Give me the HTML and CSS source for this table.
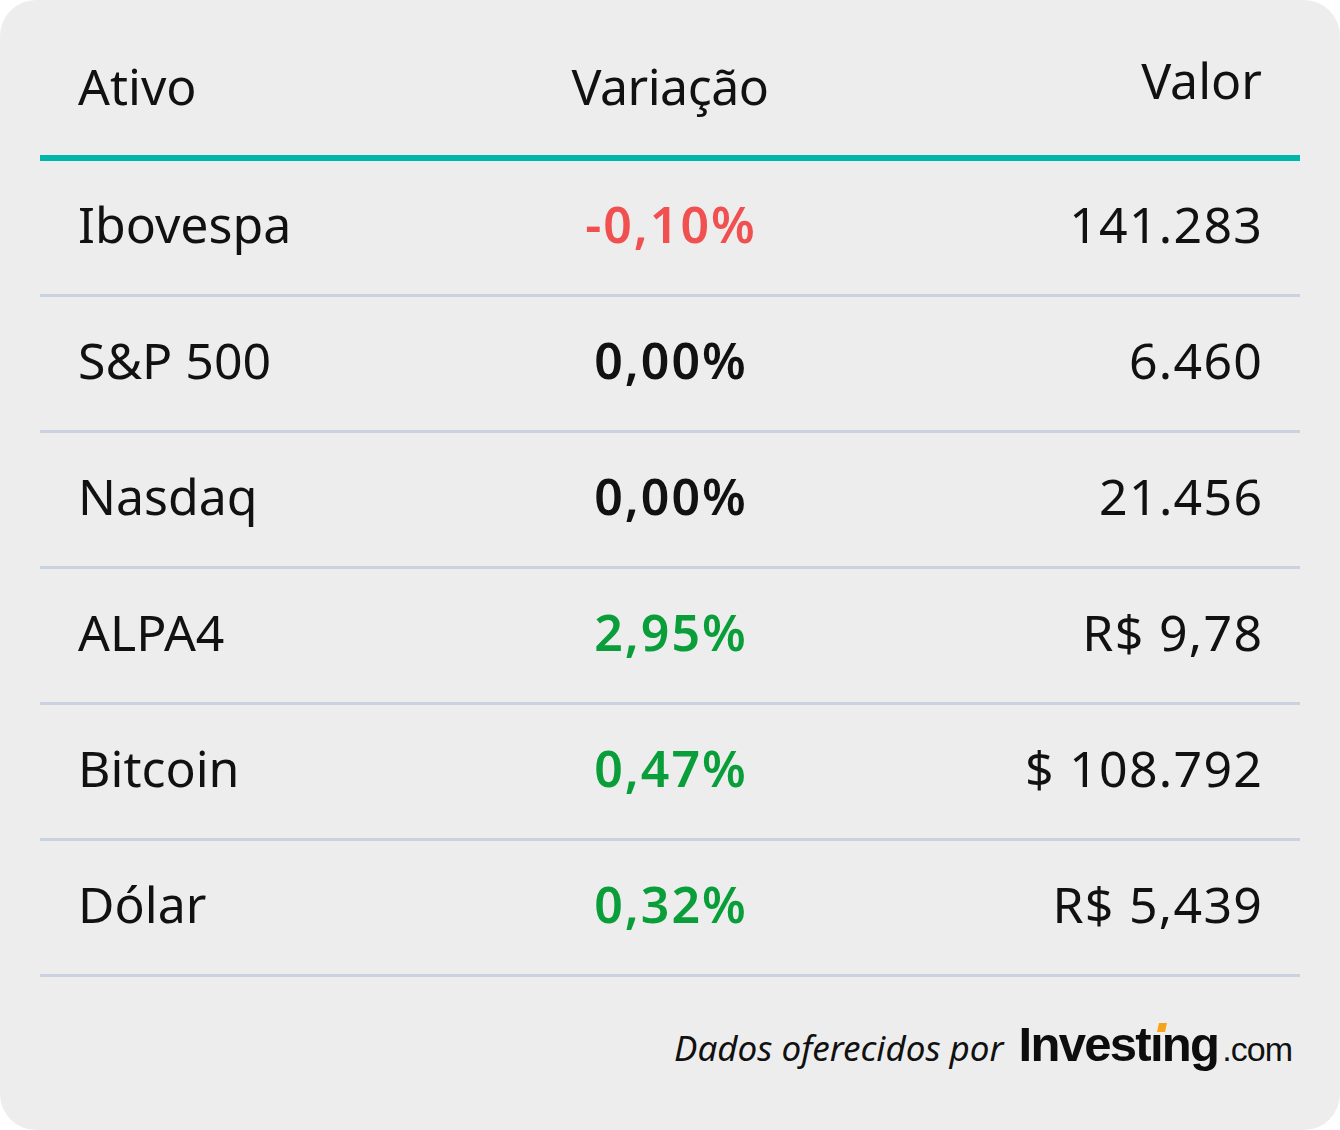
FILE: index.html
```html
<!DOCTYPE html>
<html lang="pt-BR">
<head>
<meta charset="utf-8">
<title>Mercado</title>
<link rel="stylesheet" href="styles.css">
</head>
<body>
<div class="card">
  <div class="row head">
    <div class="c-name">Ativo</div>
    <div class="c-var">Variação</div>
    <div class="c-val c-val-head">Valor</div>
  </div>
  <div class="row">
    <div class="c-name">Ibovespa</div>
    <div class="c-var neg">-0,10%</div>
    <div class="c-val">141.283</div>
  </div>
  <div class="row">
    <div class="c-name">S&amp;P 500</div>
    <div class="c-var">0,00%</div>
    <div class="c-val">6.460</div>
  </div>
  <div class="row">
    <div class="c-name">Nasdaq</div>
    <div class="c-var">0,00%</div>
    <div class="c-val">21.456</div>
  </div>
  <div class="row">
    <div class="c-name">ALPA4</div>
    <div class="c-var pos">2,95%</div>
    <div class="c-val">R$ 9,78</div>
  </div>
  <div class="row">
    <div class="c-name">Bitcoin</div>
    <div class="c-var pos">0,47%</div>
    <div class="c-val">$ 108.792</div>
  </div>
  <div class="row">
    <div class="c-name">Dólar</div>
    <div class="c-var pos">0,32%</div>
    <div class="c-val">R$ 5,439</div>
  </div>
  <div class="footer">
    <span class="by">Dados oferecidos por</span>
    <span class="logo"><span class="logo-main">Investı<span class="logo-dot"></span>ng</span><span class="logo-com">.com</span></span>
  </div>
</div>
</body>
</html>
```

FILE: styles.css
```css
html, body {
  margin: 0;
  padding: 0;
  background: #ffffff;
}

.card {
  width: 1340px;
  height: 1130px;
  box-sizing: border-box;
  background: #ededed;
  border-radius: 36px;
  padding: 0 40px;
  display: flex;
  flex-direction: column;
  font-family: "Noto Sans", "Liberation Sans", sans-serif;
  color: #111111;
}

.row {
  display: grid;
  grid-template-columns: 1fr 1fr 1fr;
  align-items: center;
  height: 136px;
  box-sizing: border-box;
  padding: 0 38px 7px;
  border-bottom: 3px solid #cad2e0;
  font-size: 50px;
  line-height: 60px;
}

.row.head {
  height: 161px;
  align-items: start;
  padding-top: 56px;
  padding-bottom: 0;
  border-bottom: 6px solid #00b5a9;
}

.c-name {
  text-align: left;
}

.c-var {
  text-align: center;
  font-weight: 600;
  letter-spacing: 2px;
  padding-left: 2px;
}

.head .c-var {
  font-weight: 400;
  letter-spacing: -0.5px;
  padding-left: 0;
}

.c-val {
  text-align: right;
  letter-spacing: 1.3px;
  margin-right: -1.3px;
}

.head .c-val {
  letter-spacing: 0;
  margin-right: 0;
}

.c-val-head {
  margin-top: -6px;
}

.neg {
  color: #f0504f;
}

.pos {
  color: #0a9e3a;
}

.footer {
  flex: 1;
  display: flex;
  justify-content: flex-end;
  align-items: baseline;
  padding: 47px 8px 0 0;
  gap: 15px;
}

.by {
  font-style: italic;
  font-size: 35px;
  line-height: 40px;
  letter-spacing: 0;
  color: #111111;
}

.logo {
  display: inline-flex;
  align-items: baseline;
}

.logo-main {
  position: relative;
  font-family: "Liberation Sans", Arial, sans-serif;
  font-weight: 700;
  font-size: 49px;
  letter-spacing: -1.7px;
  color: #0d0d0d;
  line-height: 40px;
}

.logo-dot {
  position: absolute;
  left: 139px;
  top: -1px;
  width: 8px;
  height: 9px;
  background: #f6a31a;
  transform: skewX(-12deg);
}

.logo-com {
  font-family: "Liberation Sans", Arial, sans-serif;
  font-size: 34px;
  letter-spacing: -1px;
  color: #111111;
  margin-left: 4px;
}
```
